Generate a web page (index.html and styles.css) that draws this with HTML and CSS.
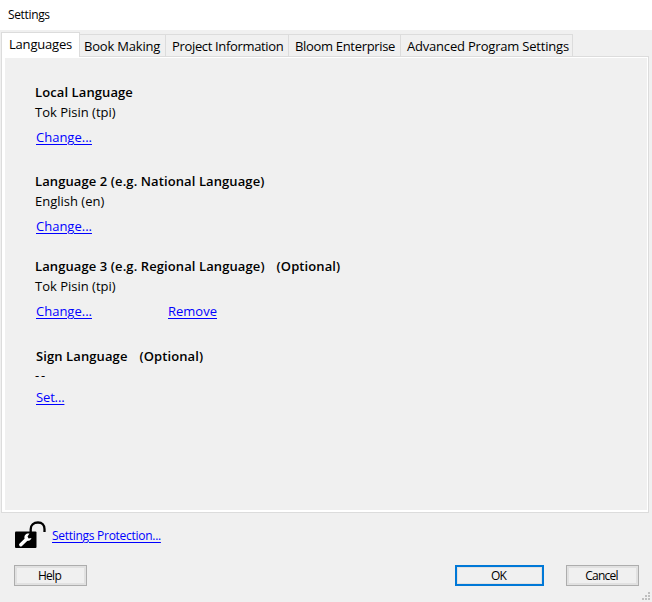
FILE: index.html
```html
<!DOCTYPE html>
<html lang="en">
<head>
<meta charset="utf-8">
<title>Settings</title>
<link rel="stylesheet" href="styles.css">
</head>
<body>
<div class="window">
  <header class="titlebar"><span class="title">Settings</span></header>
  <nav class="tabs">
    <div class="tab tab-active"><span>Languages</span></div>
    <div class="tab tab-book"><span>Book Making</span></div>
    <div class="tab tab-project"><span>Project Information</span></div>
    <div class="tab tab-bloom"><span>Bloom Enterprise</span></div>
    <div class="tab tab-advanced"><span>Advanced Program Settings</span></div>
  </nav>
  <main class="panel">
    <section class="language local">
      <h2>Local Language</h2>
      <p>Tok Pisin (tpi)</p>
      <div class="links"><a>Change...</a></div>
    </section>
    <section class="language second">
      <h2>Language 2 (e.g. National Language)</h2>
      <p class="english">English (en)</p>
      <div class="links"><a>Change...</a></div>
    </section>
    <section class="language third">
      <h2><span class="heading-main">Language 3 (e.g. Regional Language)</span><span>(Optional)</span></h2>
      <p>Tok Pisin (tpi)</p>
      <div class="links"><a class="change">Change...</a><a class="remove">Remove</a></div>
    </section>
    <section class="language sign">
      <h2><span class="heading-main">Sign Language</span><span>(Optional)</span></h2>
      <p>--</p>
      <div class="links"><a>Set...</a></div>
    </section>
  </main>
  <div class="protection">
    <svg class="lock" width="32" height="28" viewBox="0 0 32 28">
      <rect x="1" y="10.5" width="21.5" height="16.5" rx="1" fill="#000"/>
      <path d="M16.7 12V8.2C16.7 4.3 19.6 1.5 24 1.5C28.2 1.5 30.5 4.3 30.5 8V11" fill="none" stroke="#000" stroke-width="2.3"/>
      <path d="M6.8 23.7L12.5 18.2" stroke="#fff" stroke-width="3.4" stroke-linecap="round"/>
      <path d="M15.5 12.6C12.4 12 9.8 14.3 10.5 17.3C11.4 20.8 16.4 20.7 17.5 16.9L14.6 17.4L13.5 15.4Z" fill="#fff"/>
    </svg>
    <a>Settings Protection...</a>
  </div>
  <footer class="actions">
    <button class="help">Help</button>
    <button class="ok">OK</button>
    <button class="cancel">Cancel</button>
  </footer>
  <svg class="grip" width="8" height="8" viewBox="0 0 8 8" shape-rendering="crispEdges">
    <path d="M6 0h2v2h-2zM3 3h2v2h-2zM6 3h2v2h-2zM0 6h2v2h-2zM3 6h2v2h-2zM6 6h2v2h-2z" fill="#bfbfbf"/>
  </svg>
</div>
</body>
</html>
```
FILE: styles.css
```css
* { box-sizing: border-box; }
body { margin: 0; overflow: hidden; }
.window {
  position: relative;
  width: 652px;
  height: 602px;
  background: #f0f0f0;
  color: #000;
  font: 13px/18px "Open Sans", "Noto Sans", sans-serif;
  white-space: nowrap;
}
.titlebar { height: 30px; padding: 6px 8px; background: #fff; font-size: 12px; letter-spacing: -0.35px; }
.tabs { display: flex; align-items: flex-end; height: 27px; padding-left: 1px; position: relative; z-index: 1; letter-spacing: -0.2px; }
.tab { height: 23px; border: 1px solid #dcdcdc; border-left: 0; padding: 2px 0 0 4px; }
.tab-active { width: 79px; height: 25px; border-left: 1px solid #dcdcdc; border-bottom: 0; background: #fff; padding: 2px 0 0 7px; }
.tab-book { width: 86px; }
.tab-project { width: 123px; padding-left: 6px; letter-spacing: -0.34px; }
.tab-bloom { width: 112px; padding-left: 6px; letter-spacing: -0.32px; }
.tab-advanced { width: 172px; padding-left: 6px; }
.panel { margin: -1px 0 0 1px; width: 648px; height: 457px; border: 1px solid #dcdcdc; background: #f0f0f0; box-shadow: inset 3px 0 #fff, inset -1px 0 #fff, inset 0 1px #fff, inset 0 -2px #fff; padding: 26px 0 0 33px; }
.language { height: 89px; }
.second { height: 85px; }
.third { height: 90px; }
h2, p { margin: 0; font-size: 13px; line-height: 18px; }
h2 { display: flex; font-weight: 600; gap: 12px; letter-spacing: 0.1px; }
p { margin-top: 2px; }
.links { display: flex; margin-top: 7px; padding-left: 1px; }
a { color: #00f; text-decoration: underline; text-underline-offset: 2px; text-decoration-thickness: 1px; }
.change { width: 132px; }
.sign { padding-left: 1px; }
.sign p { margin-top: 1px; margin-left: -1px; letter-spacing: 1.7px; }
.sign .links { padding-left: 0; margin-top: 4px; letter-spacing: -0.15px; }
.protection { display: flex; height: 52px; padding: 8px 0 0 14px; }
.lock { flex: none; }
.protection a { margin: 6px 0 0 6px; font-size: 12px; letter-spacing: -0.28px; }
.actions { display: flex; padding-left: 14px; }
button { height: 21px; padding: 0 2px 0 0; border: 1px solid #adadad; background: #f0f0f0; box-shadow: inset 0 0 0 2px #e1e1e1; color: #000; font: 12px/17px "Open Sans", "Noto Sans", sans-serif; letter-spacing: -0.75px; }
.help { width: 73px; }
.ok { width: 89px; margin-left: 368px; border: 2px solid #0078d7; box-shadow: inset 0 0 0 1px #e1e1e1; }
.cancel { width: 73px; margin-left: 22px; }
.grip { position: absolute; right: 2px; bottom: 2px; }
```
